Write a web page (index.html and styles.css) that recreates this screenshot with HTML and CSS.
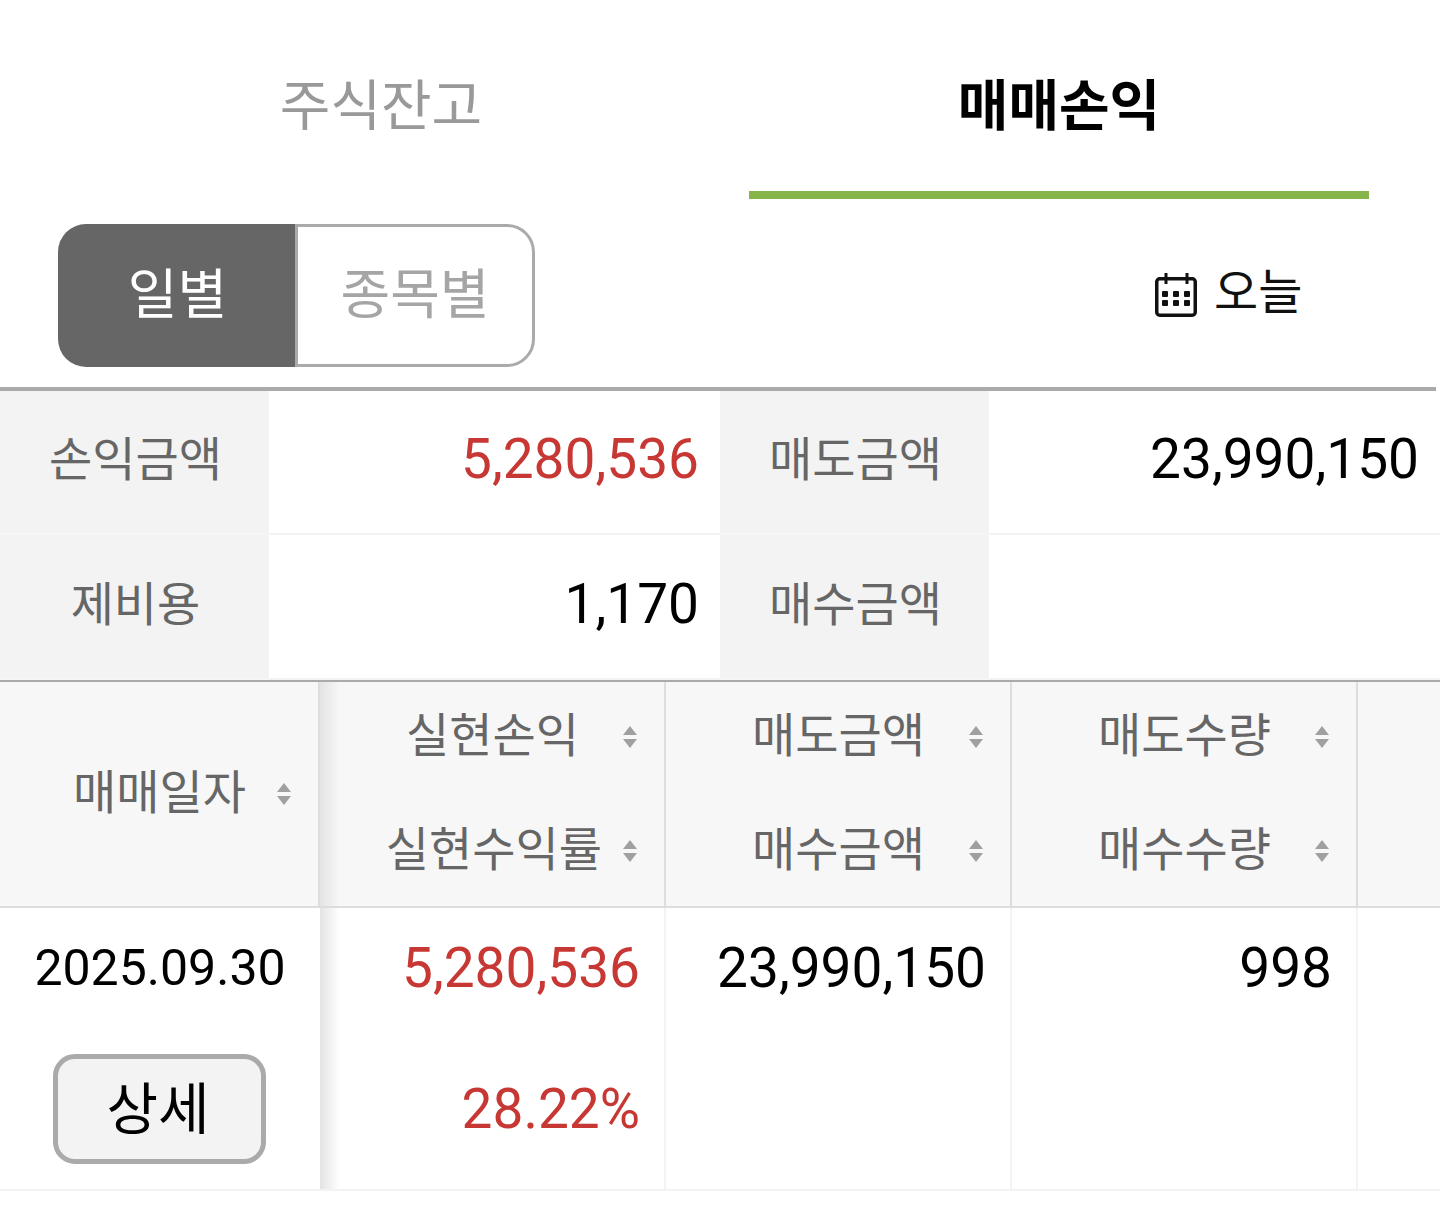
FILE: index.html
```html
<!DOCTYPE html>
<html lang="ko">
<head>
    <meta charset="UTF-8">
    <meta name="viewport" content="width=device-width, initial-scale=1.0">
    <title>매매손익</title>
    <link rel="stylesheet" href="styles.css">
</head>
<body>
    <div class="tabs">
        <div class="tab">주식잔고</div>
        <div class="tab active"><span class="tab-label">매매손익</span></div>
    </div>

    <div class="toolbar">
        <div class="segment">
            <div class="segment-item on">일별</div>
            <div class="segment-item">종목별</div>
        </div>
        <div class="today">
            <svg class="cal" viewBox="0 0 42 44" width="42" height="44">
                <rect x="1.750" y="5.750" width="38.500" height="36.500" rx="3" fill="none" stroke="#111" stroke-width="3.500"/>
                <path d="M11 0v11M32 0v11" stroke="#111" stroke-width="3"/>
                <g fill="#111">
                    <rect x="7" y="18" width="6" height="6" rx="1"/>
                    <rect x="18" y="18" width="6" height="6" rx="1"/>
                    <rect x="29" y="18" width="6" height="6" rx="1"/>
                    <rect x="7" y="27" width="6" height="6" rx="1"/>
                    <rect x="18" y="27" width="6" height="6" rx="1"/>
                    <rect x="29" y="27" width="6" height="6" rx="1"/>
                </g>
            </svg>
            <span>오늘</span>
        </div>
    </div>
    <div class="rule"></div>

    <div class="summary">
        <div class="s-head">손익금액</div>
        <div class="s-val red">5,280,536</div>
        <div class="s-head">매도금액</div>
        <div class="s-val">23,990,150</div>
        <div class="s-head">제비용</div>
        <div class="s-val">1,170</div>
        <div class="s-head">매수금액</div>
        <div class="s-val"></div>
    </div>

    <div class="grid">
        <div class="g-head first">
            <div class="h-line"><span>매매일자</span><svg class="sort" viewBox="0 0 16 24" width="16" height="24"><path d="M8 1l7 9H1zM1 14h14l-7 9z"/></svg></div>
        </div>
        <div class="g-head shadow">
            <div class="h-line"><span>실현손익</span><svg class="sort" viewBox="0 0 16 24" width="16" height="24"><path d="M8 1l7 9H1zM1 14h14l-7 9z"/></svg></div>
            <div class="h-line wide"><span>실현수익률</span><svg class="sort" viewBox="0 0 16 24" width="16" height="24"><path d="M8 1l7 9H1zM1 14h14l-7 9z"/></svg></div>
        </div>
        <div class="g-head">
            <div class="h-line"><span>매도금액</span><svg class="sort" viewBox="0 0 16 24" width="16" height="24"><path d="M8 1l7 9H1zM1 14h14l-7 9z"/></svg></div>
            <div class="h-line"><span>매수금액</span><svg class="sort" viewBox="0 0 16 24" width="16" height="24"><path d="M8 1l7 9H1zM1 14h14l-7 9z"/></svg></div>
        </div>
        <div class="g-head">
            <div class="h-line"><span>매도수량</span><svg class="sort" viewBox="0 0 16 24" width="16" height="24"><path d="M8 1l7 9H1zM1 14h14l-7 9z"/></svg></div>
            <div class="h-line"><span>매수수량</span><svg class="sort" viewBox="0 0 16 24" width="16" height="24"><path d="M8 1l7 9H1zM1 14h14l-7 9z"/></svg></div>
        </div>
        <div class="g-head last"></div>

        <div class="g-cell first">
            <div class="date">2025.09.30</div>
            <button class="detail">상세</button>
        </div>
        <div class="g-cell shadow">
            <div class="num red">5,280,536</div>
            <div class="num red">28.22%</div>
        </div>
        <div class="g-cell">
            <div class="num">23,990,150</div>
        </div>
        <div class="g-cell">
            <div class="num">998</div>
        </div>
        <div class="g-cell last"></div>
    </div>
</body>
</html>
```

FILE: styles.css
```css
* {
    box-sizing: border-box;
}

body {
    margin: 0;
    background-color: #fff;
    font-family: Roboto, "Noto Sans CJK KR", sans-serif;
    color: #000;
}

.tabs {
    display: grid;
    grid-template-columns: 678px 678px;
    padding-left: 42px;
    height: 199px;
}

.tab {
    display: flex;
    justify-content: center;
    padding-top: 67px;
    font-size: 55px;
    line-height: 78px;
    color: #999;
}

.tab.active {
    position: relative;
    color: #000;
    font-weight: 700;
}

.tab.active::after {
    content: "";
    position: absolute;
    left: 29px;
    right: 29px;
    bottom: 0;
    height: 8px;
    background-color: #86b449;
}

.toolbar {
    display: flex;
    justify-content: space-between;
    padding: 25px 0 0 58px;
    height: 188px;
}

.segment {
    display: flex;
    width: 477px;
    height: 143px;
}

.segment-item {
    flex: 1;
    display: flex;
    justify-content: center;
    align-items: center;
    padding-bottom: 10px;
    font-size: 54px;
    color: #a5a5a5;
    border: 3px solid #aaa;
    border-radius: 0 28px 28px 0;
}

.segment-item.on {
    flex: none;
    width: 237px;
    padding-left: 2px;
    color: #fff;
    background-color: #666;
    border: none;
    border-radius: 28px 0 0 28px;
}

.today {
    display: flex;
    align-items: flex-start;
    gap: 17px;
    width: 285px;
    padding-top: 39px;
    font-size: 48px;
    line-height: 60px;
    color: #111;
}

.cal {
    margin-top: 10px;
}

.rule {
    width: 1436px;
    height: 4px;
    background-color: #aaa;
}

.summary {
    display: grid;
    grid-template-columns: 269px 451px 269px 451px;
    grid-template-rows: 144px 145px;
    width: 1440px;
}

.s-head {
    display: flex;
    justify-content: center;
    align-items: center;
    padding-bottom: 13px;
    padding-left: 2px;
    font-size: 47px;
    color: #666;
    background-color: #f3f3f3;
    border-bottom: 2px solid #f6f6f6;
}

.s-val {
    display: flex;
    justify-content: flex-end;
    align-items: center;
    padding-right: 21px;
    padding-bottom: 6px;
    font-size: 55px;
    border-bottom: 2px solid #f3f3f3;
}

.red {
    color: #c73834;
}

.grid {
    display: grid;
    grid-template-columns: 320px 346px 346px 346px 82px;
    grid-template-rows: 226px 283px;
    border-top: 2px solid #aaa;
}

.g-head {
    display: flex;
    flex-direction: column;
    justify-content: center;
    gap: 54px;
    padding-right: 26px;
    background-color: #f7f7f7;
    border-right: 2px solid #ddd;
    border-bottom: 2px solid #ddd;
    font-size: 47px;
    color: #666;
}

.h-line {
    display: flex;
    justify-content: flex-end;
    align-items: center;
    gap: 43px;
    height: 60px;
}

.h-line span {
    margin-bottom: 12px;
}

.h-line.wide {
    gap: 20px;
}

.g-head.first .h-line {
    gap: 30px;
}

.g-head.last,
.g-cell.last {
    border-right: none;
}

.sort {
    flex: none;
    fill: #a0a0a0;
}

.g-cell {
    display: flex;
    flex-direction: column;
    align-items: flex-end;
    padding: 21px 24px 0 0;
    gap: 63px;
    border-right: 2px solid #f3f3f3;
    border-bottom: 2px solid #f3f3f3;
    font-size: 55px;
}

.num {
    line-height: 78px;
}

.g-cell.first {
    align-items: center;
    padding: 25px 0 0;
    gap: 51px;
    border-right: none;
}

.date {
    font-size: 50px;
    line-height: 70px;
}

.detail {
    width: 213px;
    height: 110px;
    margin-right: 1px;
    padding: 0 3px 10px 0;
    font-family: inherit;
    font-size: 56px;
    color: #000;
    background-color: #f3f3f3;
    border: 5px solid #aaa;
    border-radius: 22px;
}

.shadow {
    background-image: linear-gradient(to right, #e4e4e4, rgba(240, 240, 240, 0) 20px);
}
```
